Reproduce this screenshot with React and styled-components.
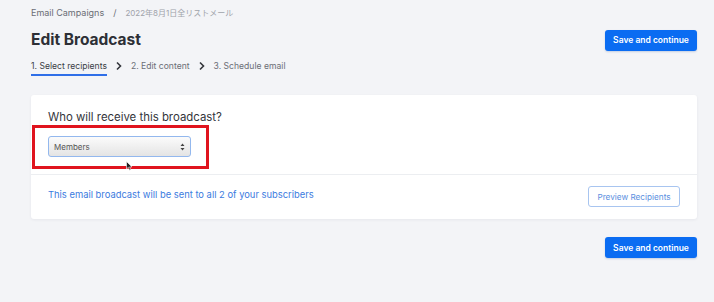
import React from 'react'
import styled, { createGlobalStyle } from 'styled-components';

const GlobalStyle = createGlobalStyle`
  body {
    margin: 0;
    background: #f3f4f7;
    font-family: Inter, "Noto Sans", "Noto Sans CJK JP", sans-serif;
    color: #2d2f36;
  }
`;

const Page = styled.div`
  padding: 6px 17px 40px 31px;
  display: flex;
  flex-direction: column;
`;

const Breadcrumb = styled.div`
  display: flex;
  align-items: center;
  gap: 9px;
  font-size: 9px;
  line-height: 14px;
  color: #6b6e76;
`;

const Crumb = styled.span`
  color: ${p => (p.$muted ? '#a0a3aa' : '#6b6e76')};
  font-size: ${p => (p.$muted ? '8px' : '9px')};
`;

const TitleRow = styled.div`
  display: flex;
  align-items: center;
  justify-content: space-between;
  margin-top: 9px;
`;

const Title = styled.h1`
  margin: 0;
  font-size: 15.5px;
  line-height: 22px;
  font-weight: 700;
  color: #2d2f36;
`;

const PrimaryButton = styled.button`
  height: 21px;
  width: 92px;
  padding: 0;
  border: none;
  border-radius: 3px;
  background: #0a6cf2;
  color: #fff;
  font-family: inherit;
  font-size: 8.5px;
  font-weight: 600;
  box-shadow: 0 1px 2px rgba(10, 60, 140, 0.2);
`;

const Steps = styled.div`
  display: flex;
  align-items: flex-start;
  gap: 8px;
  margin-top: 8px;
`;

const Step = styled.div`
  font-size: 8.6px;
  line-height: 14px;
  padding-bottom: 1px;
  color: ${p => (p.$active ? '#3a3d45' : '#6b6e76')};
  border-bottom: 2px solid ${p => (p.$active ? '#2f6fe8' : 'transparent')};
`;

const Chevron = styled.svg`
  width: 8px;
  height: 14px;
`;

const Card = styled.div`
  margin-top: 19px;
  background: #fff;
  border-radius: 3px;
  box-shadow: 0 1px 3px rgba(30, 40, 60, 0.06);
`;

const CardBody = styled.div`
  padding: 14px 17px 17px;
  border-bottom: 1px solid #eceef1;
`;

const Question = styled.div`
  font-size: 11.4px;
  line-height: 16px;
  color: #33353b;
`;

const SelectWrap = styled.div`
  position: relative;
  width: 143px;
  margin-top: 11px;
`;

const Select = styled.div`
  height: 19px;
  display: flex;
  align-items: center;
  justify-content: space-between;
  padding: 0 5px 0 5px;
  border: 1px solid #93b8ee;
  border-radius: 3px;
  background: linear-gradient(#fbfbfb, #e4e4e4);
  font-size: 8px;
  color: #555;
`;

const Highlight = styled.div`
  position: absolute;
  left: -16px;
  top: -11px;
  right: -18px;
  bottom: -12px;
  border: 3px solid #e0141e;
  pointer-events: none;
`;

const Cursor = styled.svg`
  position: absolute;
  left: 78px;
  top: 25px;
  width: 7px;
  height: 10px;
`;

const CardFooter = styled.div`
  display: flex;
  align-items: center;
  justify-content: space-between;
  padding: 11px 17px 12px;
`;

const Note = styled.div`
  font-size: 9.4px;
  color: #3b7be0;
  margin-top: -5px;
`;

const OutlineButton = styled.button`
  height: 21px;
  width: 92px;
  padding: 0;
  border: 1px solid #a8c5f0;
  border-radius: 3px;
  background: #fff;
  color: #5b8fe0;
  font-family: inherit;
  font-size: 8.2px;
`;

const Actions = styled.div`
  display: flex;
  justify-content: flex-end;
  margin-top: 18px;
`;

const ChevronIcon = () => (
  <Chevron viewBox="0 0 8 14">
    <path d="M2 3.5 L5.5 7 L2 10.5" fill="none" stroke="#33353b" strokeWidth="1.6" />
  </Chevron>
);

export default function App() {
  return (
    <>
      <GlobalStyle />
      <Page>
        <Breadcrumb>
          <Crumb>Email Campaigns</Crumb>
          <Crumb>/</Crumb>
          <Crumb $muted>2022年8月1日全リストメール</Crumb>
        </Breadcrumb>
        <TitleRow>
          <Title>Edit Broadcast</Title>
          <PrimaryButton>Save and continue</PrimaryButton>
        </TitleRow>
        <Steps>
          <Step $active>1. Select recipients</Step>
          <ChevronIcon />
          <Step>2. Edit content</Step>
          <ChevronIcon />
          <Step>3. Schedule email</Step>
        </Steps>
        <Card>
          <CardBody>
            <Question>Who will receive this broadcast?</Question>
            <SelectWrap>
              <Select>
                <span>Members</span>
                <svg width="5" height="8" viewBox="0 0 5 8">
                  <path d="M0.5 3 L2.5 0.5 L4.5 3 Z M0.5 5 L2.5 7.5 L4.5 5 Z" fill="#444" />
                </svg>
              </Select>
              <Highlight />
              <Cursor viewBox="0 0 7 10">
                <path d="M0.5 0.5 L0.5 8 L2.3 6.3 L3.6 9.3 L4.8 8.8 L3.6 5.9 L6 5.9 Z" fill="#222" stroke="#fff" strokeWidth="0.6" />
              </Cursor>
            </SelectWrap>
          </CardBody>
          <CardFooter>
            <Note>This email broadcast will be sent to all 2 of your subscribers</Note>
            <OutlineButton>Preview Recipients</OutlineButton>
          </CardFooter>
        </Card>
        <Actions>
          <PrimaryButton>Save and continue</PrimaryButton>
        </Actions>
      </Page>
    </>
  )
}
